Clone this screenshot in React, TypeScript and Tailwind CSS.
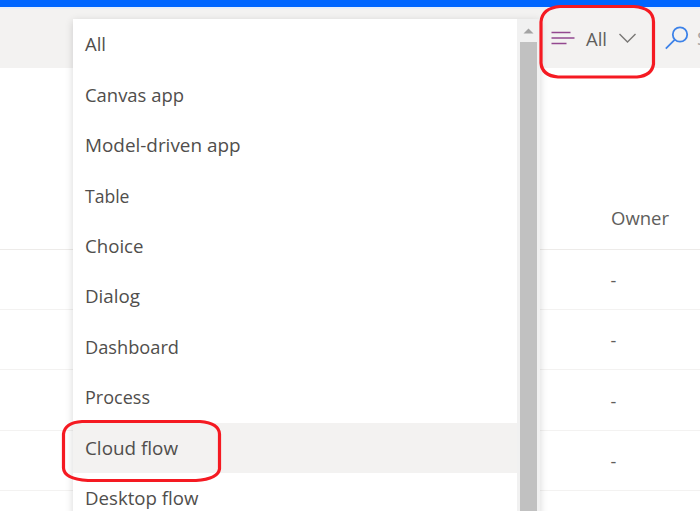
const items = [
  { label: "All", width: 21 },
  { label: "Canvas app", width: 99 },
  { label: "Model-driven app", width: 155.5 },
  { label: "Table", width: 44.5 },
  { label: "Choice", width: 58.5 },
  { label: "Dialog", width: 55 },
  { label: "Dashboard", width: 94 },
  { label: "Process", width: 65 },
  { label: "Cloud flow", width: 93 },
  { label: "Desktop flow", width: 113.5 },
];

function Label({ text, width }: { text: string; width: number }) {
  return (
    <svg width={width} height="26" className="block shrink-0 overflow-visible" fill="currentColor">
      <text x="0" y="20" textLength={width} lengthAdjust="spacingAndGlyphs">{text}</text>
    </svg>
  );
}

function FilterMenu() {
  return (
    <div className="absolute left-[73px] top-[19px] flex h-[510px] w-[467px] bg-white shadow-[0_2px_8px_rgba(0,0,0,0.16)]">
      <ul className="flex w-[444px] flex-col">
        {items.map((item) => (
          <li
            key={item.label}
            className={`flex h-[50.45px] shrink-0 items-center pl-[11.5px] text-[19px] text-[#504e4c] ${item.label === "Cloud flow" ? "bg-[#f3f2f1]" : ""}`}
          >
            <Label text={item.label} width={item.width} />
          </li>
        ))}
      </ul>
      <div className="flex w-[23px] flex-col items-center bg-[#f1f1f1]">
        <div className="flex h-[23px] w-full items-center justify-center">
          <svg width="11" height="6" viewBox="0 0 11 6"><path d="M0.5 5.5 5.5 0.5 10.5 5.5Z" fill="#a3a3a3" /></svg>
        </div>
        <div className="w-[17.5px] flex-1 bg-[#c1c1c1]" />
      </div>
    </div>
  );
}

export default function App() {
  return (
    <div className="relative h-[511px] w-[700px] overflow-hidden bg-white font-['Open_Sans','Noto_Sans',sans-serif]">
      <div className="h-[7px] bg-[#0066ff]" />
      <header className="flex h-[61px] items-center border-t-2 border-[#e7effb] bg-[#f3f2f1] pl-[551px] text-[19px] text-[#605e5c]">
        <svg className="shrink-0" width="24" height="16" viewBox="0 0 24 16" fill="none" stroke="#934890" strokeWidth="1.6">
          <path d="M0.5 1.5H19.5M0.5 7H23.5M0.5 12.5H15.5" />
        </svg>
        <div className="ml-[11px]"><Label text="All" width={21} /></div>
        <svg className="ml-[11px] shrink-0" width="19" height="12" viewBox="0 0 19 12" fill="none" stroke="#797775" strokeWidth="1.4">
          <path d="M1.5 1 9.5 9 17.5 1" />
        </svg>
        <svg className="ml-[28px] shrink-0" width="25" height="26" viewBox="0 0 25 26" fill="none" stroke="#3c82e8" strokeWidth="1.8">
          <circle cx="15" cy="8.5" r="7.2" />
          <path d="M9.8 13.7 0.8 22.7" />
        </svg>
        <span className="ml-[7px] text-[#a6a4a2]">S</span>
      </header>
      <main>
        <div className="flex h-[181.5px] items-end border-b border-[#edebe9] pb-[18px] pl-[611px] text-[18px] text-[#605e5c]">
          <Label text="Owner" width={58} />
        </div>
        {["-", "-", "-", "-", ""].map((owner, row) => (
          <div key={row} className="flex h-[60.45px] items-center border-b border-[#f3f2f1] pl-[610.5px] pt-[2px] text-[18px] text-[#605e5c]">
            {owner}
          </div>
        ))}
      </main>
      <FilterMenu />
      <svg className="pointer-events-none absolute inset-0" width="700" height="511" fill="none" stroke="#f51a22" strokeWidth="3.2">
        <path d="M560 6.5H634Q653.5 8 653.5 22V64Q652 75.5 637 77H558Q542 75.5 541 63V22Q542 8 560 6.5Z" />
        <path d="M82 421.5H200Q219 423 219.5 434V469Q218 479 196 480.5H88Q64 479 63.5 468V434Q65 422.5 82 421.5Z" />
      </svg>
    </div>
  );
}
